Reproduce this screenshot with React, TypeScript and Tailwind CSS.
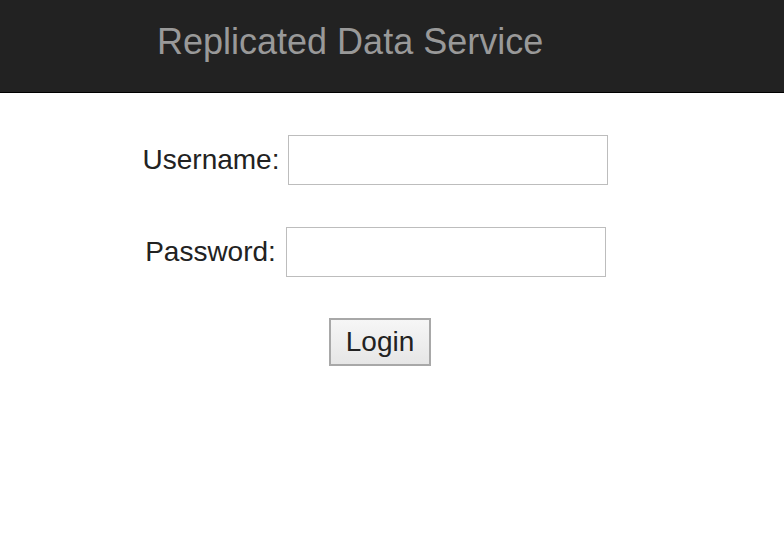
export default function App() {
  return (
    <div className="min-h-[542px] bg-white font-['Liberation_Sans',Arial,sans-serif] text-[#222]">
      <header className="h-[93px] border-b border-black bg-[#222222]">
        <h1 className="pl-[157px] pt-[20px] text-[36px] leading-[44px] text-[#999999]">
          Replicated Data Service
        </h1>
      </header>

      <form className="flex w-[751px] flex-col items-center pt-[42px]">
        <div className="flex items-center gap-[9px]">
          <label className="text-[28px] leading-[32px]">Username:</label>
          <input
            type="text"
            className="h-[50px] w-[320px] border border-[#bdbdbd] bg-white px-2 text-[20px] outline-none"
          />
        </div>
        <div className="mt-[42px] flex items-center gap-[10px]">
          <label className="text-[28px] leading-[32px]">Password:</label>
          <input
            type="password"
            className="h-[50px] w-[320px] border border-[#bdbdbd] bg-white px-2 text-[20px] outline-none"
          />
        </div>
        <button
          type="button"
          className="ml-[9px] mt-[41px] h-[48px] w-[102px] border-2 border-[#a8a8a8] bg-gradient-to-b from-[#f6f6f6] to-[#e6e6e6] text-[28px] leading-[32px] text-[#222]"
        >
          Login
        </button>
      </form>
    </div>
  );
}
